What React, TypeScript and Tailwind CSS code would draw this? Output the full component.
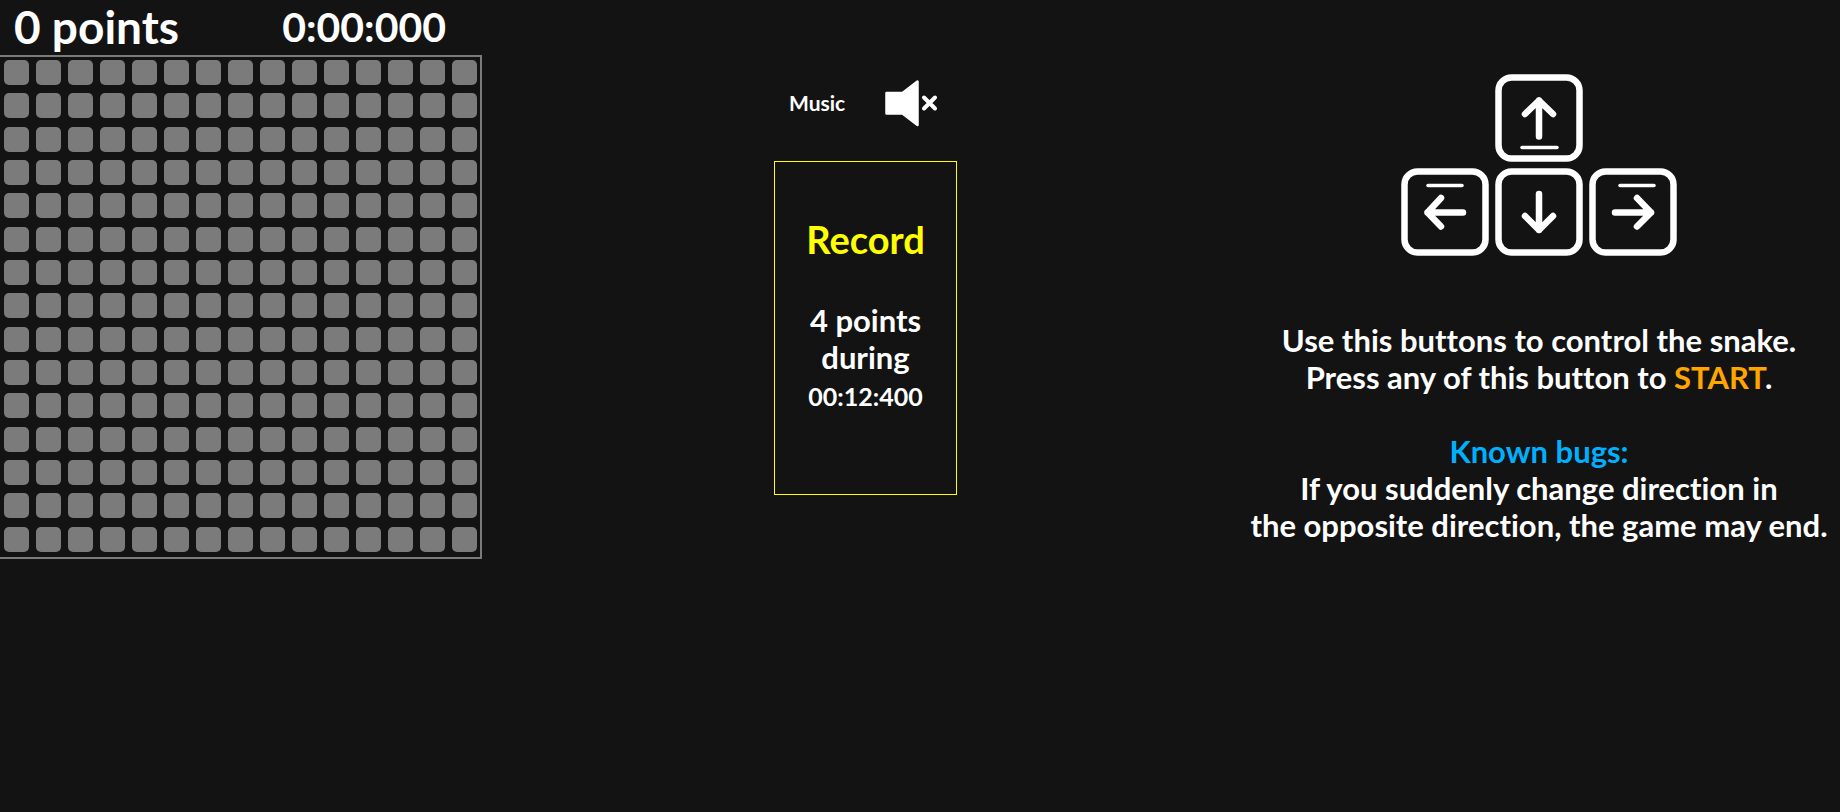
import React from "react";

const SIZE = 15;

const keys = {
  up: { label: "Up", arrow: "M44 62.5V26.5M30 40L44 26.5L58 40", mark: "M27 73.5H62" },
  left: { label: "Left", arrow: "M62 44.5H26.5M40 30L26.5 44.5L40 58.5", mark: "M27 17.5H61" },
  down: { label: "Down", arrow: "M44 26V62M30 48L44 62L58 48", mark: "" },
  right: { label: "Right", arrow: "M26 44.5H62M48 30L62 44.5L48 58.5", mark: "M31 17.5H65" },
};

function Key({ name }: { name: keyof typeof keys }) {
  const { label, arrow, mark } = keys[name];
  return (
    <button type="button" aria-label={label} className="block size-22">
      <svg viewBox="0 0 88 88" className="size-full" fill="none" stroke="white" strokeLinecap="round" strokeLinejoin="round">
        <rect x="3.5" y="3.5" width="81" height="81" rx="13" strokeWidth="6.5" />
        <path d={arrow} strokeWidth="6.5" />
        <path d={mark} strokeWidth="3.5" />
      </svg>
    </button>
  );
}

function Board() {
  return (
    <section className="w-[482px] shrink-0">
      <header className="flex h-[55px] items-center justify-between pr-9 pb-0.5 pl-3.5 leading-none">
        <span className="text-[46px]">0 points</span>
        <time className="text-[41px]">0:00:000</time>
      </header>
      <div className="grid h-[504px] grid-cols-[repeat(15,32px)] grid-rows-[repeat(15,1fr)] border-2 border-l-0 border-[#7b7b7b]">
        {Array.from({ length: SIZE * SIZE }, (_, i) => (
          <div key={i} className="mt-[3px] ml-1 size-[25px] rounded-[5px] bg-[#7b7b7b]" />
        ))}
      </div>
    </section>
  );
}

function Status() {
  return (
    <section className="flex w-[183px] shrink-0 flex-col pt-[78px]">
      <div className="flex h-[50px] items-center justify-between pr-[18px] pl-[15px]">
        <span className="text-[21px]">Music</span>
        <button type="button" aria-label="Toggle music">
          <svg viewBox="0 0 56 48" className="h-12 w-14" fill="white" stroke="white" strokeLinecap="round" strokeLinejoin="round">
            <path d="M3.5 14H19.5L34.5 2.5V46L19.5 34.5H3.5Z" strokeWidth="2.5" />
            <path d="M41 18.5L52 29.5M52 18.5L41 29.5" strokeWidth="4" />
          </svg>
        </button>
      </div>
      <div className="mt-[33px] flex h-[334px] flex-col items-center border border-[#ffff00] text-center">
        <h2 className="mt-[54px] text-[38px] leading-[46px] text-[#ffff00]">Record</h2>
        <p className="mt-10 text-[31px] leading-[37px]">
          4 points
          <br />
          during
          <br />
          <time className="text-[25px]">00:12:400</time>
        </p>
      </div>
    </section>
  );
}

function Help() {
  return (
    <section className="flex w-[580px] shrink-0 flex-col items-center pt-[74px]">
      <div className="flex flex-col items-center gap-1.5">
        <Key name="up" />
        <div className="flex gap-1.5">
          <Key name="left" />
          <Key name="down" />
          <Key name="right" />
        </div>
      </div>
      <p className="mt-[66px] text-center text-[31px] leading-[37px] whitespace-nowrap">
        Use this buttons to control the snake.
        <br />
        Press any of this button to <span className="text-[#ffa500]">START</span>.
        <br />
        <br />
        <span className="text-[#00b0ff]">Known bugs:</span>
        <br />
        If you suddenly change direction in
        <br />
        the opposite direction, the game may end.
      </p>
    </section>
  );
}

export default function App() {
  return (
    <main className="flex min-h-screen items-start justify-between bg-[#131313] pr-[11px] font-[Lato,sans-serif] font-bold text-white [font-variant-ligatures:none]">
      <Board />
      <Status />
      <Help />
    </main>
  );
}
